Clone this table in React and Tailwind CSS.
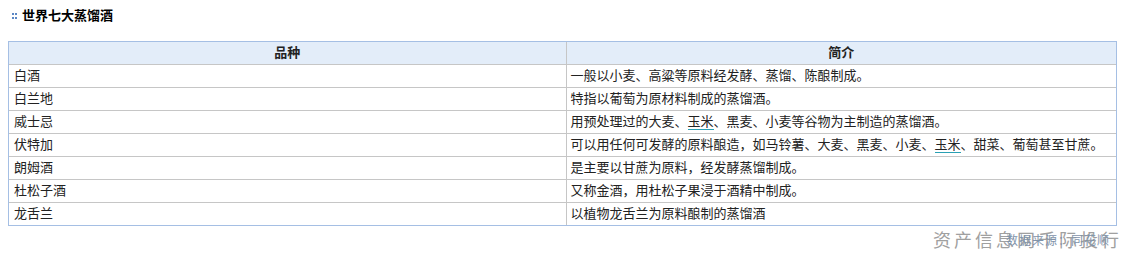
const rows = [
  ["白酒", "一般以小麦、高粱等原料经发酵、蒸馏、陈酿制成。"],
  ["白兰地", "特指以葡萄为原材料制成的蒸馏酒。"],
  [
    "威士忌",
    <>
      用预处理过的大麦、<Link>玉米</Link>、黑麦、小麦等谷物为主制造的蒸馏酒。
    </>,
  ],
  [
    "伏特加",
    <>
      可以用任何可发酵的原料酿造，如马铃薯、大麦、黑麦、小麦、<Link>玉米</Link>、甜菜、葡萄甚至甘蔗。
    </>,
  ],
  ["朗姆酒", "是主要以甘蔗为原料，经发酵蒸馏制成。"],
  ["杜松子酒", "又称金酒，用杜松子果浸于酒精中制成。"],
  ["龙舌兰", "以植物龙舌兰为原料酿制的蒸馏酒"],
];

function Link({ children }) {
  return <span className="border-b border-[#2aa0b4] leading-[15px]">{children}</span>;
}

export default function App() {
  return (
    <div
      className="relative w-[1121px] h-[255px] bg-white text-[#222] overflow-hidden"
      style={{ fontFamily: '"Liberation Sans", "Noto Sans CJK SC", sans-serif' }}
    >
      <div className="flex items-center gap-[5px] pl-[12px] pt-[7px] h-[24px]">
        <span className="grid grid-cols-2 gap-x-[1px] gap-y-[2px]">
          <i className="w-[2px] h-[2px] bg-[#5b87c5]" />
          <i className="w-[2px] h-[2px] bg-[#5b87c5]" />
          <i className="w-[2px] h-[2px] bg-[#5b87c5]" />
          <i className="w-[2px] h-[2px] bg-[#5b87c5]" />
        </span>
        <h2 className="text-[13px] font-bold leading-[16px] text-black">世界七大蒸馏酒</h2>
      </div>

      <div className="mx-[8px] mt-[17px] w-[1109px] border border-[#a5bfe4]">
        <table className="w-full border-collapse text-[13px] leading-[22px]">
          <thead>
            <tr className="bg-[#e3edf9]">
              <th className="w-[557px] font-bold text-center h-[22px] p-0">品种</th>
              <th className="font-bold text-center border-l border-[#c6c6c6] h-[22px] p-0">简介</th>
            </tr>
          </thead>
          <tbody>
            {rows.map(([name, desc]) => (
              <tr key={name} className="border-t border-[#c6c6c6]">
                <td className="pl-[5px] h-[22px] p-0">{name}</td>
                <td className="pl-[4px] h-[22px] p-0 border-l border-[#c6c6c6]">{desc}</td>
              </tr>
            ))}
          </tbody>
        </table>
      </div>

      {/* watermark */}
      <div className="absolute left-[933px] bottom-[1px] whitespace-nowrap">
        <span className="text-[18px] leading-[22px] tracking-[3px] text-[#a0a0a0]">资产信息网千际投行</span>
        <span className="absolute left-[73px] top-[4px] text-[12px] leading-[14px] tracking-[1px] text-[#7f93aa]">
          数据来源：同花顺
        </span>
      </div>
    </div>
  );
}
